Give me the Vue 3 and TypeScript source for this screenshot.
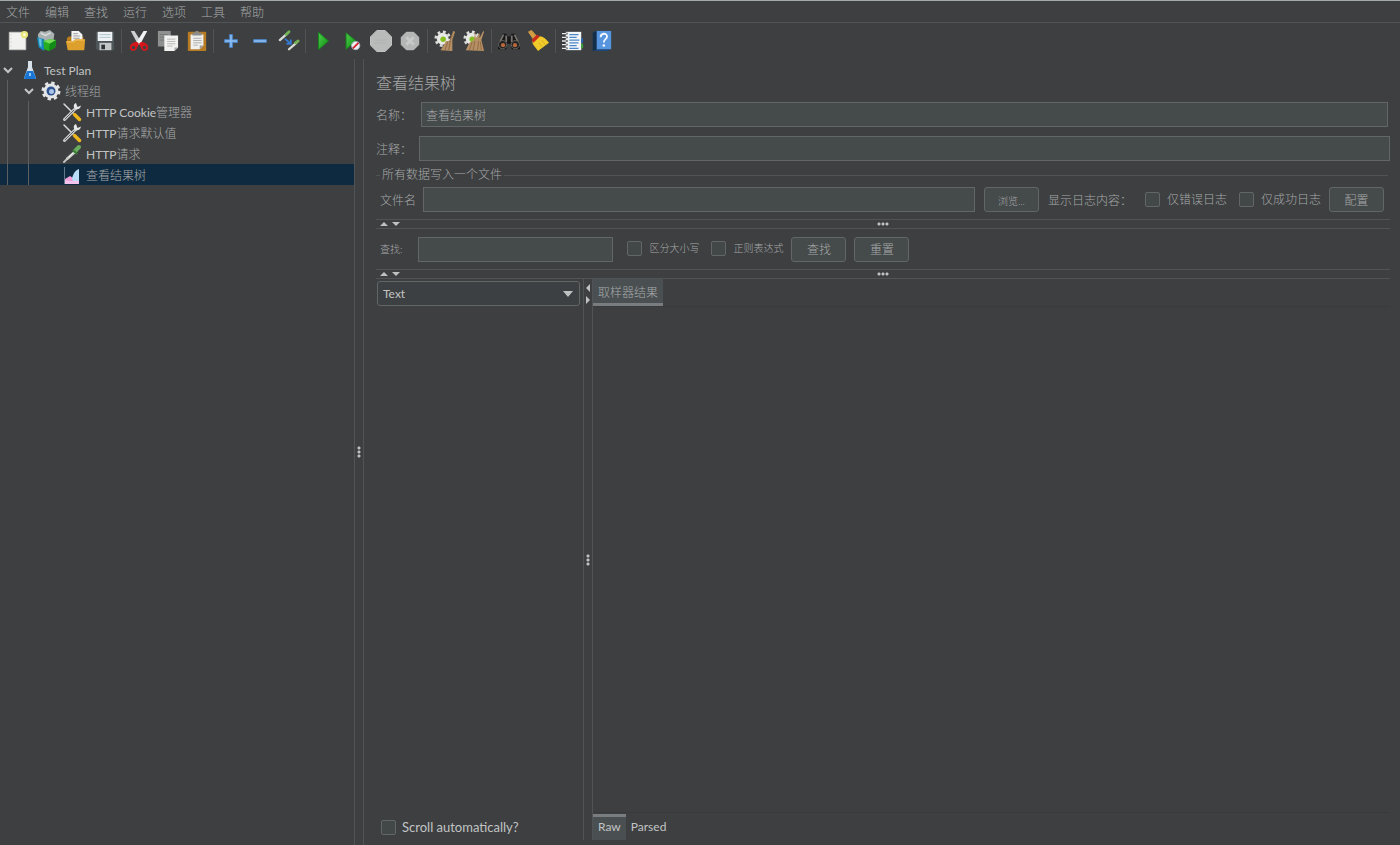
<script setup lang="ts">
import { ref } from 'vue'

interface TreeNode {
  latin?: string
  label?: string
  icon: string
  depth: number
  open?: boolean
}

const menus: string[] = ['文件', '编辑', '查找', '运行', '选项', '工具', '帮助']

const toolGroups: { id: string; title: string }[][] = [
  [
    { id: 'new', title: '新建' },
    { id: 'templates', title: '模板' },
    { id: 'open', title: '打开' },
    { id: 'save', title: '保存' },
  ],
  [
    { id: 'cut', title: '剪切' },
    { id: 'copy', title: '复制' },
    { id: 'paste', title: '粘贴' },
  ],
  [
    { id: 'expand', title: '全部展开' },
    { id: 'collapse', title: '全部折叠' },
    { id: 'toggle', title: '切换' },
  ],
  [
    { id: 'start', title: '启动' },
    { id: 'startNoPause', title: '不停顿开始' },
    { id: 'stop', title: '停止' },
    { id: 'shutdown', title: '关闭' },
  ],
  [
    { id: 'clear', title: '清除' },
    { id: 'clearAll', title: '清除全部' },
  ],
  [
    { id: 'search', title: '查找' },
    { id: 'resetSearch', title: '重置搜索' },
  ],
  [
    { id: 'functions', title: '函数助手' },
    { id: 'help', title: '帮助' },
  ],
]

const nodes: TreeNode[] = [
  { latin: 'Test Plan', icon: 'flask', depth: 0, open: true },
  { label: '线程组', icon: 'gear', depth: 1, open: true },
  { latin: 'HTTP Cookie', label: '管理器', icon: 'tools', depth: 2 },
  { latin: 'HTTP', label: '请求默认值', icon: 'tools', depth: 2 },
  { latin: 'HTTP', label: '请求', icon: 'pipette', depth: 2 },
  { label: '查看结果树', icon: 'chart', depth: 2 },
]

const selected = ref(5)
const name = ref('查看结果树')
const comment = ref('')
const fileName = ref('')
const query = ref('')
const errorsOnly = ref(false)
const successOnly = ref(false)
const caseSensitive = ref(false)
const useRegex = ref(false)
const autoScroll = ref(false)
const renderer = ref('Text')
const bodyTab = ref('Raw')
</script>

<template>
  <div class="app">
    <nav class="menubar">
      <button v-for="m in menus" :key="m" type="button">{{ m }}</button>
    </nav>

    <div class="toolbar" role="toolbar">
      <div v-for="(group, gi) in toolGroups" :key="gi" class="group">
        <button v-for="t in group" :key="t.id" type="button" :aria-label="t.title">
          <svg viewBox="0 0 24 24" width="24" height="24">
            <g v-if="t.id === 'new'">
              <path d="M2.500 2.500h18v19h-18z" fill="#f1f1ef" stroke="#c9c9c5" />
              <path d="M4.500 5v15" stroke="#c4c4c0" stroke-dasharray="1 3" />
              <circle cx="19" cy="5" r="4" fill="#e9e77c" /><circle cx="19" cy="5" r="1.500" fill="#fffde0" />
            </g>
            <g v-else-if="t.id === 'templates'">
              <path d="M2 5l3-4 5 1 5-2 5 4-1 8H3z" fill="#a9b0b0" />
              <path d="M5 3l5 3 6-3" stroke="#d5d9d9" fill="none" stroke-width="2" />
              <path d="M1 8l8 2v13l-6-4z" fill="#1687b8" /><path d="M3 9l3 1v9l-2-2z" fill="#6cc4e4" />
              <path d="M8 12l7-2 7 1-1 8-7 4-5-2z" fill="#27ad22" /><path d="M8 12l7-2 7 1-7 4z" fill="#77dd58" /><path d="M15 15l-1 8 7-4 1-8z" fill="#138b17" />
            </g>
            <g v-else-if="t.id === 'open'">
              <path d="M2 9l2-2h16v14H3z" fill="#b97d1c" />
              <path d="M7 1h8l4 4v9H7z" fill="#f3f3f3" /><path d="M9 4h5M9 6.500h7M9 9h7" stroke="#999" />
              <path d="M1 12h8l2-2h11l-1 12H3z" fill="#dda02d" /><path d="M2 13h8l2-2h9" stroke="#f4c35e" fill="none" />
            </g>
            <g v-else-if="t.id === 'save'">
              <path d="M2 2h20v20H4l-2-2z" fill="#4e5558" /><path d="M4 2h16v10H4z" fill="#eef2f4" />
              <path d="M6 5h12M6 8h12" stroke="#a8bfc9" /><path d="M6 14h13v8H6z" fill="#c3c7c8" /><path d="M8 16h4v5H8z" fill="#303335" />
            </g>
            <g v-else-if="t.id === 'cut'">
              <path d="M3 1l4 0 8 13-4 2z" fill="#d0d2d2" /><path d="M21 1l-4 0-8 13 4 2z" fill="#f2f3f3" />
              <path d="M10 13c-4 0-8 2-8 6 0 5 7 5 8 0l2-4 2 4c1 5 8 5 8 0 0-4-4-6-8-6l-2 2z" fill="#d5161b" />
              <ellipse cx="6" cy="19" rx="1.800" ry="1.800" fill="#3d3f41" /><ellipse cx="18" cy="19" rx="1.800" ry="1.800" fill="#3d3f41" />
            </g>
            <g v-else-if="t.id === 'copy'">
              <path d="M1 1h14v17H1z" fill="#8f9190" /><path d="M3 5h9M3 8h9M3 11h5" stroke="#737675" />
              <path d="M8 6h15v13l-4 4H8z" fill="#f2f2f1" /><path d="M11 10h9M11 12.500h9M11 15h9M11 17.500h6" stroke="#b5b5b3" /><path d="M19 23v-4h4z" fill="#aaa" />
            </g>
            <g v-else-if="t.id === 'paste'">
              <rect x="2" y="2" width="20" height="21" rx="1" fill="#b67b23" /><path d="M5 5h14v12l-4 4H5z" fill="#f0f0ee" />
              <path d="M7 3h3c0-3 4-3 4 0h3v3H7z" fill="#8b8d8c" /><path d="M8 9h9M8 11.500h9M8 14h9M8 16.500h5" stroke="#aaa" /><path d="M15 21v-4h4z" fill="#999" />
            </g>
            <path v-else-if="t.id === 'expand'" d="M10.500 5h3v5.500h5.500v3h-5.500V19h-3v-5.500H5v-3h5.500z" fill="#87b9ee" stroke="#4a83c8" />
            <path v-else-if="t.id === 'collapse'" d="M5 10.500h14v3H5z" fill="#87b9ee" stroke="#4a83c8" />
            <g v-else-if="t.id === 'toggle'" stroke-linecap="round">
              <path d="M2 11l8-7" stroke="#d9ded8" stroke-width="2.500" /><path d="M9 5l3-3" stroke="#72b255" stroke-width="3" />
              <path d="M12 21l8-7" stroke="#d9ded8" stroke-width="2.500" /><path d="M19 14l3-2" stroke="#72b255" stroke-width="3" />
              <path d="M8 10l6 5m0-4v4h-4" stroke="#3579cf" stroke-width="2" fill="none" />
            </g>
            <path v-else-if="t.id === 'start'" d="M7 2.500l11 9.500L7 21.500z" fill="url(#green)" stroke="#16811b" />
            <g v-else-if="t.id === 'startNoPause'">
              <path d="M5.500 3l11 9-11 9z" fill="url(#green)" stroke="#16811b" />
              <circle cx="16" cy="17" r="4.500" fill="#e9eef3" stroke="#a8b5c2" /><path d="M13 20l6-6" stroke="#d6222a" stroke-width="2" />
            </g>
            <g v-else-if="t.id === 'stop'">
              <path d="M7.500.500h9l7 7v9l-7 7h-9l-7-7v-9z" fill="#b9bbba" stroke="#c9cac9" /><path d="M5 11h14M5 14h14" stroke="#b0b2b1" />
            </g>
            <g v-else-if="t.id === 'shutdown'">
              <path d="M8 2.500h8l5.500 5.500v8L16 21.500H8L2.500 16V8z" fill="#b4b6b5" stroke="#c4c5c4" /><path d="M8 8l8 8M16 8l-8 8" stroke="#c8c9c8" stroke-width="3" />
            </g>
            <g v-else-if="t.id === 'clear' || t.id === 'clearAll'">
              <circle cx="9.500" cy="9.500" r="6.500" fill="#e9e9e7" />
              <circle cx="9.500" cy="9.500" r="7.500" fill="none" stroke="#dededc" stroke-width="3" stroke-dasharray="3 2.890" />
              <circle cx="10" cy="10" r="3" fill="#85bf20" />
              <g v-if="t.id === 'clear'"><path d="M21 1l2 1-3 9 0 12-13-1 4-6 2-4h4z" fill="#b69064" /><path d="M18 12l-2 10M15 13l-3 9M20 5l-3 8" stroke="#8b6843" /></g>
              <g v-else><path d="M13 1l1 8 4-6v6l4-8 1 1-3 9 3 12-20-1 4-8 5-3z" fill="#b69064" /><path d="M10 13l-3 9M13 12l-2 10M17 12l-1 10M19 13l1 9" stroke="#8b6843" /></g>
            </g>
            <g v-else-if="t.id === 'search'">
              <path d="M5 4h4l2 3h2l2-3h4l5 11v6h-9l-1-6h-4l-1 6H0v-6z" fill="#171717" />
              <path d="M6 5L2 13M18 5l4 8M9 6v7M15 6v7" stroke="#77746f" stroke-width="2" />
              <circle cx="5" cy="16" r="4.500" fill="#222" stroke="#6d6963" /><circle cx="19" cy="16" r="4.500" fill="#222" stroke="#6d6963" />
              <circle cx="5.500" cy="16.500" r="2.300" fill="#b9683b" /><circle cx="18.500" cy="16.500" r="2.300" fill="#b9683b" />
            </g>
            <g v-else-if="t.id === 'resetSearch'">
              <path d="M1 2l4-2 7 8-5 3z" fill="#d39b42" /><path d="M12 7c5-1 9 3 12 7l-12 9c-2-4-7-7-6-11z" fill="#f0ca2b" />
              <path d="M5 11l6-6 3 2-7 7z" fill="#c72b1b" /><path d="M16 11l4 5M13 14l4 5" stroke="#d5aa1c" />
            </g>
            <g v-else-if="t.id === 'functions'">
              <path d="M4 2h17v20H4z" fill="#f3f6f8" /><path d="M8 5h10M8 8h8M8 11h11M8 14h10M8 17h8M8 20h10" stroke="#4d88c6" stroke-width="1.500" />
              <path d="M1 4h5M1 8h5M1 12h5M1 16h5M1 20h5" stroke="#1b1b1b" stroke-width="2" /><path d="M0 4h5M0 8h5M0 12h5M0 16h5M0 20h5" stroke="#eee" stroke-width="1.500" />
              <path d="M21 9h2v5h-2z" fill="#2264b2" /><path d="M21 15h2v5h-2z" fill="#35a634" />
            </g>
            <g v-else>
              <path d="M2 3l3-2h16v20l-3 2H2z" fill="#1e4674" /><path d="M6 1h16v20H6z" fill="#5795df" /><path d="M2 3l4-2v20l-4 2z" fill="#152e48" />
              <path d="M10.500 8c0-5 7-5 7-1 0 3-3.500 3-3.500 6.500" stroke="#f3f8ff" stroke-width="2" fill="none" /><circle cx="14" cy="17" r="1.400" fill="#f3f8ff" />
            </g>
          </svg>
        </button>
      </div>
      <svg width="0" height="0" aria-hidden="true">
        <defs><linearGradient id="green" x2="1" y2="1"><stop stop-color="#4fd04a" /><stop offset="1" stop-color="#0b8b13" /></linearGradient></defs>
      </svg>
    </div>

    <div class="workspace">
      <ul class="tree" role="tree">
        <li
          v-for="(n, i) in nodes"
          :key="i"
          role="treeitem"
          :aria-selected="selected === i"
          :class="['d' + n.depth, { selected: selected === i }]"
          @click="selected = i"
        >
          <i v-for="g in n.depth" :key="g" class="guide" />
          <svg v-if="n.open" class="twist" viewBox="0 0 12 12"><path d="M2 4l4 4 4-4" fill="none" stroke="#c4c6c6" stroke-width="2" /></svg>
          <svg class="icon" viewBox="0 0 20 20">
            <g v-if="n.icon === 'flask'">
              <path d="M8 1h4v6l4 11q0 1-1 1H5q-1 0-1-1L8 7z" fill="#d8e2ea" /><path d="M7 11h6l3 7q0 1-1 1H5q-1 0-1-1z" fill="#1875d4" /><path d="M9 13h2v3H9z" fill="#8dc6fb" />
            </g>
            <g v-else-if="n.icon === 'gear'">
              <circle cx="10" cy="10" r="8" fill="none" stroke="#e3e5e7" stroke-width="3" stroke-dasharray="3.300 2.983" /><circle cx="10" cy="10" r="7.500" fill="#e3e5e7" />
              <circle cx="10" cy="10" r="4.500" fill="#2e548f" /><circle cx="10.500" cy="10.500" r="2.500" fill="#a8c3e6" />
            </g>
            <g v-else-if="n.icon === 'tools'" stroke-linecap="round">
              <path d="M2 2l9 9" stroke="#d8dada" stroke-width="1.500" /><path d="M12.500 12.500l5 5" stroke="#edb51e" stroke-width="3.500" />
              <path d="M2.500 17.500L14 6" stroke="#cfd2d2" stroke-width="3" /><path d="M3 17l9-9" stroke="#5b5e5f" /><path d="M14 1c-3 1-3 5 0 6.500 2 0 4.500-1 5-4L15.500 5z" fill="#e5e7e7" />
            </g>
            <g v-else-if="n.icon === 'pipette'" stroke-linecap="round">
              <path d="M2 18l4-4" stroke="#bfc3c0" stroke-width="2" /><path d="M5.500 14.500L14 7" stroke="#c6cbc6" stroke-width="3" /><path d="M7 13l5-5" stroke="#f4f6f2" /><path d="M13 7l4-4" stroke="#69ad5e" stroke-width="4" /><path d="M11.500 6.500l3 3" stroke="#3b7f37" stroke-width="2" />
            </g>
            <g v-else>
              <path d="M2.500 2v17" stroke="#61798a" /><path d="M3 14l5-3 3 2 6-5v11H3z" fill="#ee9fda" /><path d="M10 13c2-6 4-8 7-9v12l-6 1z" fill="#b9dcf8" /><path d="M3 15l5 1 9 0v3H3z" fill="#f5c4ec" />
            </g>
          </svg>
          <span><b v-if="n.latin">{{ n.latin }}</b>{{ n.label }}</span>
        </li>
      </ul>

      <div class="vsplit"><span class="dots" /></div>

      <main class="panel">
        <h1>查看结果树</h1>
        <div class="field name-row">
          <label for="name">名称：</label>
          <input id="name" v-model="name" type="text" />
        </div>
        <div class="field comment-row">
          <label for="comment">注释：</label>
          <input id="comment" v-model="comment" type="text" />
        </div>

        <fieldset>
          <legend>所有数据写入一个文件</legend>
          <div class="file-row">
            <label for="file">文件名</label>
            <input id="file" v-model="fileName" type="text" />
            <button class="btn small" type="button">浏览...</button>
            <span class="log-label">显示日志内容：</span>
            <label class="check"><input v-model="errorsOnly" type="checkbox" />仅错误日志</label>
            <label class="check"><input v-model="successOnly" type="checkbox" />仅成功日志</label>
            <button class="btn" type="button">配置</button>
          </div>
        </fieldset>

        <div class="hsplit">
          <svg viewBox="0 0 22 6" width="22" height="6"><path d="M1 5l4-4 4 4zM13 1l4 4 4-4z" fill="#c0c2c2" /></svg>
          <span class="dots" />
        </div>

        <div class="search-row">
          <label class="tiny" for="query">查找:</label>
          <input id="query" v-model="query" type="text" />
          <label class="check tiny"><input v-model="caseSensitive" type="checkbox" />区分大小写</label>
          <label class="check tiny"><input v-model="useRegex" type="checkbox" />正则表达式</label>
          <button class="btn" type="button">查找</button>
          <button class="btn" type="button">重置</button>
        </div>

        <div class="hsplit">
          <svg viewBox="0 0 22 6" width="22" height="6"><path d="M1 5l4-4 4 4zM13 1l4 4 4-4z" fill="#c0c2c2" /></svg>
          <span class="dots" />
        </div>

        <div class="results">
          <section class="samples">
            <div class="combo">
              <select v-model="renderer" aria-label="Renderer"><option>Text</option></select>
              <svg viewBox="0 0 10 6" width="10" height="6"><path d="M0 0h10L5 6z" fill="#c0c2c2" /></svg>
            </div>
            <label class="check auto"><input v-model="autoScroll" type="checkbox" />Scroll automatically?</label>
          </section>
          <div class="vsplit inner">
            <svg viewBox="0 0 6 20" width="6" height="20"><path d="M5 0v8L1 4zM1 12v8l4-4z" fill="#c0c2c2" /></svg>
            <span class="dots" />
          </div>
          <section class="output">
            <div class="tabs top"><button class="active" type="button">取样器结果</button></div>
            <div class="view" />
            <div class="tabs bottom">
              <button v-for="t in ['Raw', 'Parsed']" :key="t" type="button" :class="{ active: bodyTab === t }" @click="bodyTab = t">{{ t }}</button>
            </div>
          </section>
        </div>
      </main>
    </div>
  </div>
</template>

<style>
body {
  margin: 0;
  background: #3d3f41;
}
</style>

<style scoped>
.app {
  --line: #515456;
  --edge: #626667;
  --field: #454a4b;
  --text: #a6a8a8;
  --latin: #c2c4c4;
  display: flex;
  flex-direction: column;
  height: 100vh;
  box-sizing: border-box;
  border-top: 1px solid #a4aaaa;
  background: #3d3f41;
  color: var(--text);
  font: 300 12px/16px Lato, "Noto Sans CJK SC", sans-serif;
  overflow: hidden;
}
.app * {
  box-sizing: border-box;
}
button,
input,
select {
  font: inherit;
  color: inherit;
}
button {
  padding: 0;
  border: 0;
  background: none;
  white-space: nowrap;
}
label {
  white-space: nowrap;
}
.menubar {
  display: flex;
  gap: 15px;
  height: 22px;
  padding: 2px 6px 0;
  border-bottom: 1px solid var(--line);
  align-items: center;
}
.toolbar {
  display: flex;
  align-items: center;
  height: 36px;
  padding-left: 6px;
}
.group {
  display: flex;
  gap: 5px;
}
.group + .group {
  margin-left: 4px;
  padding-left: 5px;
  border-left: 1px solid var(--line);
}
.group:nth-of-type(n + 5) {
  margin-left: 5px;
}
.group button,
.group svg {
  display: block;
  width: 24px;
  height: 24px;
}
.group svg {
  padding: 1px;
}
.workspace {
  flex: 1;
  display: flex;
  min-height: 0;
}
.tree {
  width: 354px;
  margin: 0;
  padding: 0;
  list-style: none;
}
.tree li {
  display: flex;
  align-items: center;
  height: 21px;
  padding-left: 2px;
}
.guide {
  align-self: stretch;
  width: 21px;
  padding-left: 5px;
}
.guide::before {
  content: "";
  display: block;
  width: 1px;
  height: 100%;
  background: #5c6061;
}
.twist {
  width: 12px;
  height: 12px;
}
.icon {
  width: 20px;
  height: 20px;
  margin: 0 4px 0 6px;
}
.d2 .icon {
  margin-left: 18px;
}
.tree span {
  padding-top: 2px;
}
.tree b {
  color: var(--latin);
  font-weight: 400;
}
.tree li.selected {
  background: #0e2a40;
}
.vsplit {
  flex: none;
  display: flex;
  flex-direction: column;
  align-items: center;
  justify-content: center;
  width: 10px;
  border: solid var(--line);
  border-width: 0 1px;
}
.dots {
  width: 12px;
  height: 4px;
  background: radial-gradient(circle, #c0c2c2 1px, transparent 2px) 0 0 / 4px 4px;
}
.vsplit .dots {
  width: 4px;
  height: 12px;
}
.panel {
  flex: 1;
  display: flex;
  flex-direction: column;
  min-width: 0;
  padding: 0 10px 5px 12px;
}
h1 {
  margin: 12px 0 7px;
  font: inherit;
  font-size: 16px;
  line-height: 24px;
}
.field {
  display: flex;
  align-items: center;
}
.field label,
.file-row > label:first-child,
.log-label,
.btn {
  padding-top: 2px;
}
.name-row {
  gap: 9px;
  margin: 0 2px 9px 0;
}
.comment-row {
  gap: 7px;
}
input[type="text"] {
  height: 25px;
  min-width: 0;
  padding: 0 4px;
  border: 1px solid var(--edge);
  border-radius: 0;
  background: var(--field);
  outline: none;
}
.field input,
.file-row input[type="text"] {
  flex: 1;
}
fieldset {
  min-width: 0;
  margin: 6px 2px 0 0;
  padding: 4px 4px 7px;
  border: 0;
  border-top: 1px solid var(--line);
}
legend {
  padding: 0 2px;
}
.file-row,
.search-row {
  display: flex;
  align-items: center;
}
.file-row input[type="text"] {
  margin: 0 9px 0 7px;
}
.btn {
  width: 55px;
  height: 25px;
  border: 1px solid var(--edge);
  border-radius: 3px;
  background: var(--field);
}
.small,
.tiny {
  font-size: 10px;
}
.log-label {
  margin: 0 13px 0 9px;
}
.check {
  display: flex;
  align-items: center;
  gap: 7px;
  margin-right: 12px;
}
.file-row .check:last-of-type {
  margin-right: 8px;
}
input[type="checkbox"] {
  appearance: none;
  width: 15px;
  height: 15px;
  margin: 0;
  border: 1px solid var(--edge);
  border-radius: 2px;
  background: #424748;
}
input[type="checkbox"]:checked {
  background: #7da7c9;
}
.hsplit {
  flex: none;
  display: grid;
  grid-template-columns: 1fr auto 1fr;
  align-items: center;
  height: 10px;
  border: solid var(--line);
  border-width: 1px 0;
}
.hsplit svg {
  margin-left: 3px;
}
.search-row {
  height: 40px;
  padding-left: 4px;
}
.search-row input[type="text"] {
  width: 195px;
  margin: 0 14px 0 16px;
}
.search-row .check {
  margin-bottom: 2px;
}
.search-row .check:nth-of-type(3) {
  margin-right: 8px;
}
.search-row .btn + .btn {
  margin-left: 8px;
}
.results {
  flex: 1;
  display: flex;
  min-height: 0;
}
.samples {
  display: flex;
  flex-direction: column;
  justify-content: space-between;
  width: 207px;
  padding: 2px 3px 5px 1px;
}
.combo {
  display: grid;
  align-items: center;
}
.combo select,
.combo svg {
  grid-area: 1 / 1;
}
.combo svg {
  justify-self: end;
  margin-right: 7px;
  pointer-events: none;
}
.combo select {
  appearance: none;
  height: 25px;
  padding: 0 5px;
  border: 1px solid var(--edge);
  border-radius: 3px;
  background: #3d4042;
  color: var(--latin);
  font-weight: 400;
}
.auto {
  gap: 6px;
  padding-left: 4px;
  color: var(--latin);
  font-size: 13px;
  font-weight: 400;
}
.inner {
  display: grid;
  grid-template-rows: 1fr auto 1fr;
  justify-items: center;
}
.inner svg {
  align-self: start;
  margin-top: 5px;
}
.output {
  flex: 1;
  display: flex;
  flex-direction: column;
  min-width: 0;
}
.tabs {
  display: flex;
}
.tabs button {
  padding: 0 5px;
}
.top {
  height: 28px;
  border-bottom: 1px solid #383a3c;
}
.tabs.top button {
  padding-top: 4px;
  border-bottom: 3px solid #797d7f;
  background: #4a5052;
}
.view {
  flex: 1;
}
.bottom {
  height: 28px;
  padding-top: 1px;
  border-top: 1px solid #383a3c;
  color: var(--latin);
}
.tabs.bottom button {
  padding-bottom: 4px;
  border-top: 3px solid transparent;
  font-weight: 400;
}
.tabs.bottom .active {
  border-top-color: #797d7f;
  background: #4a5052;
}
</style>
